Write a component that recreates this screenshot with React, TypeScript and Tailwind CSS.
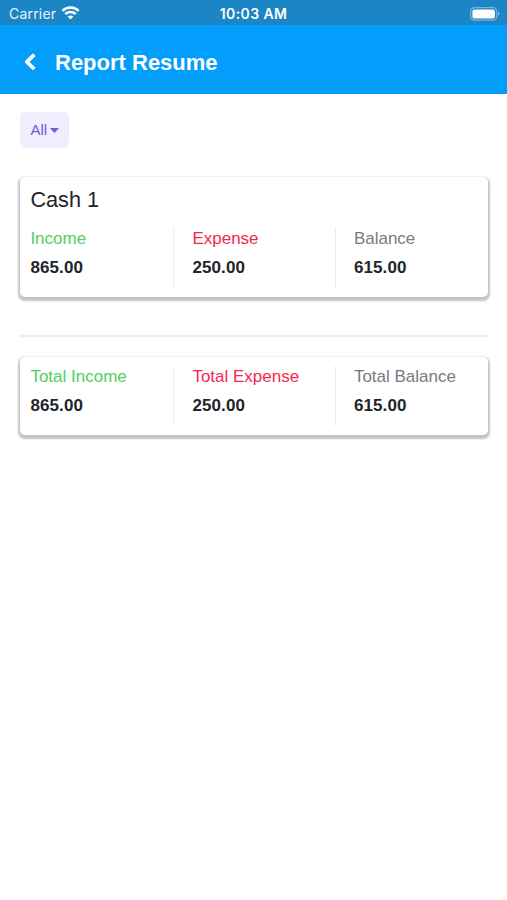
import type { ReactNode } from "react";

type Column = {
  label: string;
  value: string;
  color: string;
};

const cash: Column[] = [
  { label: "Income", value: "865.00", color: "text-[#4fd062]" },
  { label: "Expense", value: "250.00", color: "text-[#f4284f]" },
  { label: "Balance", value: "615.00", color: "text-[#777b80]" },
];

const totals: Column[] = [
  { label: "Total Income", value: "865.00", color: "text-[#4fd062]" },
  { label: "Total Expense", value: "250.00", color: "text-[#f4284f]" },
  { label: "Total Balance", value: "615.00", color: "text-[#777b80]" },
];

function StatusBar() {
  return (
    <div className="grid h-[25px] grid-cols-[1fr_80px_1fr] items-center bg-[#1c85c5] px-[7px] pt-[2px] font-[Inter,sans-serif] leading-none text-white">
      <div className="flex items-center gap-[5px] pl-[2px]">
        <span className="pt-px text-[14px] tracking-[0.2px] text-white/90">Carrier</span>
        <svg className="mb-px" width="19" height="14" viewBox="0 0 18 14" fill="none" stroke="white" strokeWidth="2.5">
          <path d="M0.9 4.9C5.4 0.5 12.6 0.5 17.1 4.9" />
          <path d="M3.8 8C6.7 5.2 11.3 5.2 14.2 8" />
          <path d="M9 13.5L6.1 10.5C7.8 9 10.2 9 11.9 10.5Z" fill="white" stroke="none" />
        </svg>
      </div>
      <span className="pt-px text-center text-[14px] font-semibold tracking-[0.4px] whitespace-nowrap">
        10:03 AM
      </span>
      <svg className="justify-self-end" width="31" height="14" viewBox="0 0 31 14">
        <rect x="1.6" y="0.6" width="26.2" height="12.6" rx="4" fill="none" stroke="white" strokeOpacity="0.4" strokeWidth="1.2" />
        <rect x="3.4" y="2.4" width="22.6" height="9" rx="2" fill="white" />
        <path d="M29 4.8C30.9 5.5 30.9 8.3 29 9Z" fill="white" fillOpacity="0.45" />
      </svg>
    </div>
  );
}

function Header() {
  return (
    <header className="flex h-[69px] items-center bg-[#039dfc] pt-[5px] pl-[24px] text-white">
      <svg width="12" height="18" viewBox="0 0 12 18" fill="none" stroke="white" strokeWidth="3.8" strokeLinejoin="round">
        <path d="M10.3 1.6L2.8 8.8L10.3 16" />
      </svg>
      <h1 className="ml-[19px] pt-px text-[22px] leading-7 font-bold">Report Resume</h1>
    </header>
  );
}

function Card({ children }: { children: ReactNode }) {
  return (
    <section className="rounded-[5px] bg-white px-[10px] shadow-[0_2px_2px_1.5px_rgba(0,0,0,0.23)]">
      {children}
    </section>
  );
}

function Columns({ items }: { items: Column[] }) {
  return (
    <div className="flex">
      {items.map((item, i) => (
        <div
          key={item.label}
          className={
            i === 0
              ? "h-[60px] w-[143px] shrink-0"
              : "h-[60px] w-[161.5px] shrink-0 border-l border-[#ececec] pl-[18px] last:w-[143px]"
          }
        >
          <p className={`text-[17px] leading-[22px] whitespace-nowrap ${item.color}`}>
            {item.label}
          </p>
          <p className="mt-[7px] text-[17px] leading-[22px] font-bold tracking-[0.1px] text-[#222428]">
            {item.value}
          </p>
        </div>
      ))}
    </div>
  );
}

export default function App() {
  return (
    <div className="min-h-screen overflow-hidden bg-white font-['Liberation_Sans',Arial,sans-serif]">
      <StatusBar />
      <Header />

      <main className="pt-[18px] pr-[19px] pl-[20.4px]">
        {/* Account filter */}
        <button className="flex h-[36px] w-[48.5px] items-center gap-[3px] rounded-[5px] bg-[#f0edfd] pl-[10px] text-[15px] text-[#7357df]">
          All
          <svg width="9" height="5" viewBox="0 0 9 5" fill="currentColor">
            <path d="M0.7 0H8.3Q9 0 8.6 0.6L5 4.6Q4.5 5 4 4.6L0.4 0.6Q0 0 0.7 0Z" />
          </svg>
        </button>

        <div className="mt-[29px]">
          <Card>
            <div className="h-[120px] pt-[9px]">
              <h2 className="mb-[14px] text-[21.7px] leading-7 text-[#222428]">Cash 1</h2>
              <Columns items={cash} />
            </div>
          </Card>
        </div>

        <hr className="mt-[38px] mb-[20px] border-t-2 border-[#eeeeee]" />

        <Card>
          <div className="h-[78px] pt-[9px]">
            <Columns items={totals} />
          </div>
        </Card>
      </main>
    </div>
  );
}
